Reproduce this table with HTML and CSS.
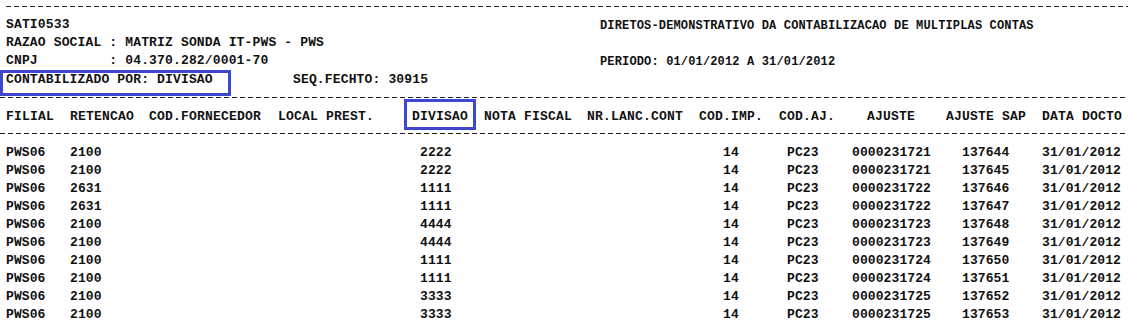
FILE: index.html
```html
<!DOCTYPE html>
<html>
<head>
<meta charset="utf-8">
<link rel="stylesheet" href="styles.css">
</head>
<body>
<div class="report">
  <div class="rule rule-top"></div>
  <div class="head">
    <div class="head-left">
      <div class="line">SATI0533</div>
      <div class="line">RAZAO SOCIAL : MATRIZ SONDA IT-PWS - PWS</div>
      <div class="line">CNPJ         : 04.370.282/0001-70</div>
      <div class="line line-last"><span class="mark mark-contab">CONTABILIZADO POR: DIVISAO</span><span class="seq">SEQ.FECHTO: 30915</span></div>
    </div>
    <div class="head-right">
      <div class="line">DIRETOS-DEMONSTRATIVO DA CONTABILIZACAO DE MULTIPLAS CONTAS</div>
      <div class="line">&nbsp;</div>
      <div class="line">PERIODO: 01/01/2012 A 31/01/2012</div>
    </div>
  </div>
  <div class="rule rule-mid"></div>
  <div class="row row-head">
    <div>FILIAL</div>
    <div>RETENCAO</div>
    <div>COD.FORNECEDOR</div>
    <div>LOCAL PREST.</div>
    <div class="h-div"><span class="mark mark-div">DIVISAO</span></div>
    <div>NOTA FISCAL</div>
    <div>NR.LANC.CONT</div>
    <div>COD.IMP.</div>
    <div>COD.AJ.</div>
    <div class="h-aj">AJUSTE</div>
    <div>AJUSTE SAP</div>
    <div>DATA DOCTO</div>
  </div>
  <div class="rule rule-low"></div>
  <div class="body-rows">
    <div class="row"><div>PWS06</div><div>2100</div><div></div><div></div><div class="d-div">2222</div><div></div><div></div><div class="d-imp">14</div><div class="d-aj">PC23</div><div>0000231721</div><div class="d-sap">137644</div><div>31/01/2012</div></div>
    <div class="row"><div>PWS06</div><div>2100</div><div></div><div></div><div class="d-div">2222</div><div></div><div></div><div class="d-imp">14</div><div class="d-aj">PC23</div><div>0000231721</div><div class="d-sap">137645</div><div>31/01/2012</div></div>
    <div class="row"><div>PWS06</div><div>2631</div><div></div><div></div><div class="d-div">1111</div><div></div><div></div><div class="d-imp">14</div><div class="d-aj">PC23</div><div>0000231722</div><div class="d-sap">137646</div><div>31/01/2012</div></div>
    <div class="row"><div>PWS06</div><div>2631</div><div></div><div></div><div class="d-div">1111</div><div></div><div></div><div class="d-imp">14</div><div class="d-aj">PC23</div><div>0000231722</div><div class="d-sap">137647</div><div>31/01/2012</div></div>
    <div class="row"><div>PWS06</div><div>2100</div><div></div><div></div><div class="d-div">4444</div><div></div><div></div><div class="d-imp">14</div><div class="d-aj">PC23</div><div>0000231723</div><div class="d-sap">137648</div><div>31/01/2012</div></div>
    <div class="row"><div>PWS06</div><div>2100</div><div></div><div></div><div class="d-div">4444</div><div></div><div></div><div class="d-imp">14</div><div class="d-aj">PC23</div><div>0000231723</div><div class="d-sap">137649</div><div>31/01/2012</div></div>
    <div class="row"><div>PWS06</div><div>2100</div><div></div><div></div><div class="d-div">1111</div><div></div><div></div><div class="d-imp">14</div><div class="d-aj">PC23</div><div>0000231724</div><div class="d-sap">137650</div><div>31/01/2012</div></div>
    <div class="row"><div>PWS06</div><div>2100</div><div></div><div></div><div class="d-div">1111</div><div></div><div></div><div class="d-imp">14</div><div class="d-aj">PC23</div><div>0000231724</div><div class="d-sap">137651</div><div>31/01/2012</div></div>
    <div class="row"><div>PWS06</div><div>2100</div><div></div><div></div><div class="d-div">3333</div><div></div><div></div><div class="d-imp">14</div><div class="d-aj">PC23</div><div>0000231725</div><div class="d-sap">137652</div><div>31/01/2012</div></div>
    <div class="row"><div>PWS06</div><div>2100</div><div></div><div></div><div class="d-div">3333</div><div></div><div></div><div class="d-imp">14</div><div class="d-aj">PC23</div><div>0000231725</div><div class="d-sap">137653</div><div>31/01/2012</div></div>
  </div>
</div>
</body>
</html>
```
FILE: styles.css
```css
html, body {
  margin: 0;
  padding: 0;
  background: #ffffff;
}
body {
  width: 1128px;
  height: 326px;
  overflow: hidden;
  font-family: "Liberation Mono", "Courier New", monospace;
  font-weight: bold;
  font-size: 13px;
  letter-spacing: 0.15px;
  color: #111111;
}
.report {
  display: flex;
  flex-direction: column;
}
.rule {
  height: 1px;
  background: repeating-linear-gradient(to right, #222 0 5px, transparent 5px 8px);
}
.rule-top {
  margin-top: 6px;
  margin-left: 6px;
}
.head {
  display: grid;
  grid-template-columns: 594px 1fr;
  padding-left: 6px;
  margin-top: 9px;
}
.line {
  height: 18px;
  line-height: 18px;
  white-space: pre;
}
.line-last {
  margin-top: 1px;
}
.head-right {
  font-size: 12px;
  letter-spacing: 0.15px;
  padding-top: 1px;
}
.mark {
  position: relative;
  display: inline-block;
  line-height: 18px;
}
.mark::after {
  content: "";
  position: absolute;
  box-sizing: border-box;
  border: 3px solid #3f48cc;
}
.mark-contab {
  width: 287px;
}
.mark-contab::after {
  left: -6px;
  top: -1px;
  width: 231px;
  height: 26px;
}
.mark-div::after {
  left: -8px;
  top: -9px;
  width: 72px;
  height: 31px;
}
.rule-mid {
  margin-top: 8px;
}
.row {
  display: grid;
  grid-template-columns: 64px 79px 129px 126px 80px 103px 112px 80px 73px 94px 96px 1fr;
  padding-left: 6px;
  height: 18px;
  line-height: 18px;
  white-space: pre;
  letter-spacing: 0.1px;
}
.row-head {
  margin-top: 10px;
  letter-spacing: 0.2px;
}
.h-div { padding-left: 8px; }
.h-aj { padding-left: 15px; }
.rule-low {
  margin-top: 7px;
}
.body-rows {
  margin-top: 10px;
  display: flex;
  flex-direction: column;
}
.d-div { padding-left: 16px; }
.d-imp { padding-left: 24px; }
.d-aj { padding-left: 8px; }
.d-sap { padding-left: 16px; }
```
